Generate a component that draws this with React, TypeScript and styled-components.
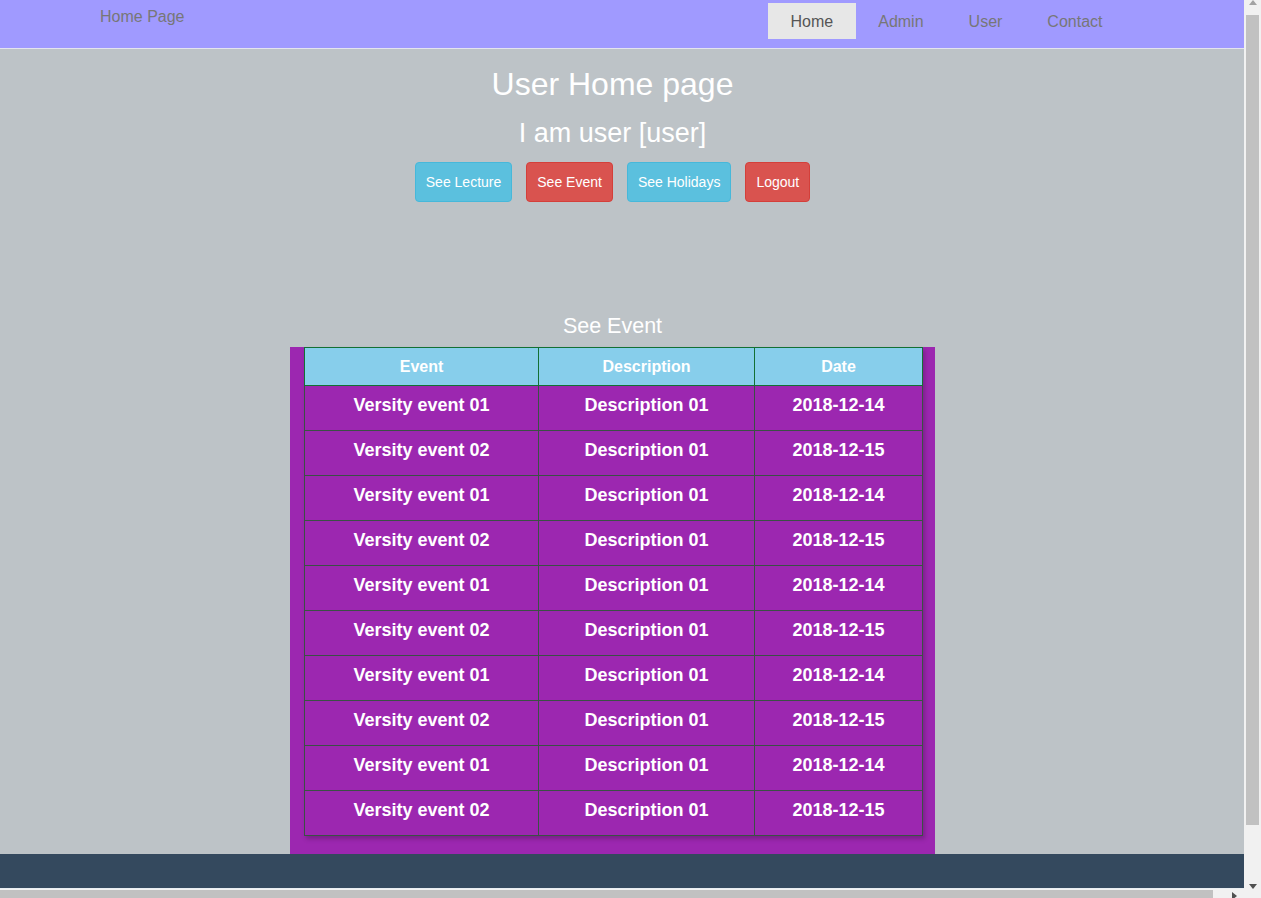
import React from "react";
import styled, { createGlobalStyle } from "styled-components";

const GlobalStyle = createGlobalStyle`
  html, body {
    margin: 0;
    padding: 0;
    overflow: hidden;
  }
  body {
    background-color: #bdc3c7;
    font-family: "Liberation Sans", Arial, sans-serif;
  }
`;

// window frame: page viewport + the browser's scrollbars as seen in the shot
const Shell = styled.div`
  display: grid;
  grid-template-columns: 1244px 17px;
  grid-template-rows: 888px 10px;
  width: 1261px;
  height: 898px;
`;

const Viewport = styled.div`
  grid-column: 1;
  grid-row: 1;
  overflow: hidden;
  display: flex;
  flex-direction: column;
  background-color: #bdc3c7;
`;

const VScroll = styled.div`
  grid-column: 2;
  grid-row: 1 / span 2;
  background-color: #f1f1f1;
  display: flex;
  flex-direction: column;
  align-items: center;
`;

const VThumb = styled.div`
  width: 13px;
  height: 810px;
  margin-top: 10px;
  background-color: #c1c1c1;
`;

const ArrowBox = styled.div<{ $top?: number }>`
  height: ${({ $top }) => $top ?? 0}px;
  display: flex;
  align-items: flex-end;
  justify-content: center;
`;

const HScroll = styled.div`
  grid-column: 1;
  grid-row: 2;
  background-color: #f1f1f1;
  border-top: 1px solid #e8edf1;
  display: flex;
  align-items: flex-start;
`;

const HThumb = styled.div`
  width: 1213px;
  height: 8px;
  margin-top: 1px;
  background-color: #c1c1c1;
`;

const HArrow = styled.div`
  margin-left: 19px;
  margin-top: 3px;
  display: flex;
`;

const Navbar = styled.nav`
  background-color: #a09aff;
  border-bottom: 1px solid #e4e4ef;
  height: 48px;
  flex-shrink: 0;
`;

const NavInner = styled.div`
  width: 1225px;
  box-sizing: border-box;
  padding: 0 100px;
  display: flex;
  justify-content: space-between;
  align-items: flex-start;
`;

const Brand = styled.a`
  color: #777;
  font-size: 16px;
  line-height: 18px;
  padding-top: 8px;
  text-decoration: none;
`;

const NavList = styled.ul`
  list-style: none;
  margin: 3px 0 0;
  padding: 0;
  display: flex;
`;

const NavLink = styled.a<{ $active?: boolean }>`
  display: block;
  height: 36px;
  line-height: 37px;
  padding: 0 22.5px;
  font-size: 16px;
  text-decoration: none;
  color: ${({ $active }) => ($active ? "#555" : "#777")};
  background-color: ${({ $active }) => ($active ? "#e7e7e7" : "transparent")};
`;

const Main = styled.main`
  width: 1225px;
  flex-shrink: 0;
  display: flex;
  flex-direction: column;
  align-items: center;
  color: #fff;
`;

const Title = styled.h1`
  margin: 17px 0 0;
  font-size: 32px;
  font-weight: normal;
  line-height: 37px;
`;

const Subtitle = styled.h2`
  margin: 15px 0 0;
  font-size: 27px;
  font-weight: normal;
  line-height: 31px;
`;

const ButtonRow = styled.div`
  display: flex;
  gap: 14px;
  margin-top: 13px;
`;

const Button = styled.button<{ $kind: "info" | "danger" }>`
  height: 40px;
  padding: 0 10px;
  font-family: "Liberation Sans", Arial, sans-serif;
  font-size: 14px;
  color: #fff;
  border-radius: 4px;
  cursor: pointer;
  background-color: ${({ $kind }) => ($kind === "info" ? "#5bc0de" : "#d9534f")};
  border: 1px solid ${({ $kind }) => ($kind === "info" ? "#46b8da" : "#d43f3a")};
`;

const SectionTitle = styled.h3`
  margin: 112px 0 0;
  font-size: 21.5px;
  font-weight: normal;
  line-height: 25px;
`;

const TableBox = styled.div`
  margin-top: 8px;
  width: 645px;
  box-sizing: border-box;
  background-color: #9c27b0;
  padding: 0 13px 18px 14px;
`;

const Table = styled.table`
  width: 618px;
  table-layout: fixed;
  border-collapse: collapse;
  box-shadow: 2px 3px 4px rgba(60, 20, 70, 0.35);
`;

const HeadCell = styled.th<{ $width: number }>`
  width: ${({ $width }) => $width}px;
  box-sizing: border-box;
  background-color: #87ceeb;
  border: 1px solid #137034;
  padding: 10px 8px 9px;
  font-size: 16px;
  line-height: 18px;
  font-weight: bold;
  color: #fff;
`;

const Cell = styled.td`
  border: 1px solid #3b5045;
  padding: 9px 8px 15px;
  font-size: 18px;
  line-height: 20px;
  font-weight: bold;
  text-align: center;
  color: #fff;
`;

const Spacer = styled.div`
  flex: 1;
`;

const Footer = styled.footer`
  background-color: #34495e;
  height: 34px;
  flex-shrink: 0;
`;

const events = Array.from({ length: 10 }, (_, i) => ({
  name: i % 2 === 0 ? "Versity event 01" : "Versity event 02",
  description: "Description 01",
  date: i % 2 === 0 ? "2018-12-14" : "2018-12-15",
}));

const App = () => {
  return (
    <Shell>
      <GlobalStyle />
      <Viewport>
        <Navbar>
          <NavInner>
            <Brand href="#">Home Page</Brand>
            <NavList>
              <li>
                <NavLink href="#" $active>
                  Home
                </NavLink>
              </li>
              <li>
                <NavLink href="#">Admin</NavLink>
              </li>
              <li>
                <NavLink href="#">User</NavLink>
              </li>
              <li>
                <NavLink href="#">Contact</NavLink>
              </li>
            </NavList>
          </NavInner>
        </Navbar>
        <Main>
          <Title>User Home page</Title>
          <Subtitle>I am user [user]</Subtitle>
          <ButtonRow>
            <Button $kind="info">See Lecture</Button>
            <Button $kind="danger">See Event</Button>
            <Button $kind="info">See Holidays</Button>
            <Button $kind="danger">Logout</Button>
          </ButtonRow>
          <SectionTitle>See Event</SectionTitle>
          <TableBox>
            <Table>
              <thead>
                <tr>
                  <HeadCell $width={234}>Event</HeadCell>
                  <HeadCell $width={216}>Description</HeadCell>
                  <HeadCell $width={168}>Date</HeadCell>
                </tr>
              </thead>
              <tbody>
                {events.map((ev, i) => (
                  <tr key={i}>
                    <Cell>{ev.name}</Cell>
                    <Cell>{ev.description}</Cell>
                    <Cell>{ev.date}</Cell>
                  </tr>
                ))}
              </tbody>
            </Table>
          </TableBox>
        </Main>
        <Spacer />
        <Footer />
      </Viewport>
      <VScroll>
        <ArrowBox $top={5}>
          <svg width="8" height="5" viewBox="0 0 8 5">
            <polygon points="0,5 8,5 4,0" fill="#a3a3a3" />
          </svg>
        </ArrowBox>
        <VThumb />
        <ArrowBox $top={64}>
          <svg width="8" height="5" viewBox="0 0 8 5">
            <polygon points="0,0 8,0 4,5" fill="#505050" />
          </svg>
        </ArrowBox>
      </VScroll>
      <HScroll>
        <HThumb />
        <HArrow>
          <svg width="5" height="8" viewBox="0 0 5 8">
            <polygon points="0,0 5,4 0,8" fill="#505050" />
          </svg>
        </HArrow>
      </HScroll>
    </Shell>
  );
};

export default App;
